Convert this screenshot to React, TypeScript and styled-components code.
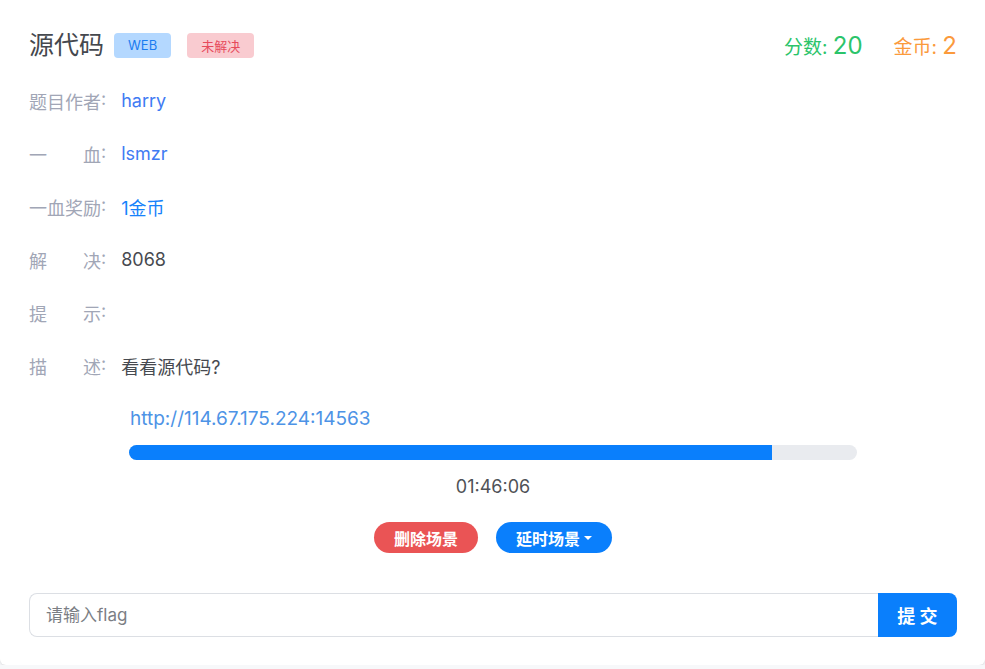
import React from 'react'
import styled, { createGlobalStyle } from 'styled-components'

const GlobalStyle = createGlobalStyle`
  body {
    margin: 0;
    background: #f7f8fa;
    font-family: Inter, 'Noto Sans CJK SC', sans-serif;
  }
`

interface Info {
  label: string
  value: string
  tone?: 'link' | 'coin' | 'plain'
}

const rows: Info[] = [
  { label: '题目作者', value: 'harry', tone: 'link' },
  { label: '一血', value: 'lsmzr', tone: 'link' },
  { label: '一血奖励', value: '1金币', tone: 'coin' },
  { label: '解决', value: '8068', tone: 'plain' },
  { label: '提示', value: '', tone: 'plain' },
  { label: '描述', value: '看看源代码?', tone: 'plain' }
]

const toneColor = {
  link: '#3f7bf3',
  coin: '#1682fb',
  plain: '#474a50'
}

const App: React.FC = () => {
  const progress = 88.3

  return (
    <>
      <GlobalStyle />
      <Card>
        <Header>
          <TitleGroup>
            <Title>源代码</Title>
            <Badge kind="info">WEB</Badge>
            <Badge kind="danger">未解决</Badge>
          </TitleGroup>
          <Stats>
            <Stat color="#2bc46a">
              分数: <big>20</big>
            </Stat>
            <Stat color="#fb9a3c">
              金币: <big>2</big>
            </Stat>
          </Stats>
        </Header>

        {rows.map((row) => (
          <Row key={row.label}>
            <Label>
              <LabelText>{row.label}</LabelText>:
            </Label>
            <Value color={toneColor[row.tone || 'plain']}>{row.value}</Value>
          </Row>
        ))}

        <Scene>
          <SceneUrl href="#">http://114.67.175.224:14563</SceneUrl>
          <Track>
            <Fill style={{ width: `${progress}%` }} />
          </Track>
          <Timer>01:46:06</Timer>
          <Actions>
            <PillButton color="#ea5455">删除场景</PillButton>
            <PillButton color="#0a7ffc">
              延时场景
              <Caret />
            </PillButton>
          </Actions>
        </Scene>

        <FlagForm onSubmit={(e) => e.preventDefault()}>
          <FlagInput placeholder="请输入flag" />
          <SubmitButton type="submit">提 交</SubmitButton>
        </FlagForm>
      </Card>
    </>
  )
}

const Card = styled.div`
  background: #fff;
  padding: 28px 28px 28px 29px;
  border-radius: 0 0 6px 6px;
  box-shadow: 0 1px 3px rgba(0, 0, 0, 0.12);
`

const Header = styled.div`
  display: flex;
  justify-content: space-between;
  align-items: center;
  height: 34px;
  margin-bottom: 12px;
`

const TitleGroup = styled.div`
  display: flex;
  align-items: center;
`

const Title = styled.h2`
  margin: 0 10px 0 0;
  font-size: 25px;
  font-weight: 400;
  color: #45484e;
  line-height: 34px;
`

const Badge = styled.span<{ kind: 'info' | 'danger' }>`
  display: inline-flex;
  align-items: center;
  justify-content: center;
  height: 25px;
  padding: 0 14px;
  margin-right: 16px;
  border-radius: 4px;
  font-size: 13px;
  background: ${(p) => (p.kind === 'info' ? '#b4d8ff' : '#f9cbd0')};
  color: ${(p) => (p.kind === 'info' ? '#1a7cf0' : '#e74a5c')};
`

const Stats = styled.div`
  display: flex;
  align-items: baseline;
  gap: 31px;
`

const Stat = styled.span<{ color: string }>`
  font-size: 19px;
  color: ${(p) => p.color};
  big {
    font-size: 24px;
  }
`

const Row = styled.div`
  display: flex;
  align-items: center;
  height: 53px;
  font-size: 18px;
`

const Label = styled.span`
  display: inline-flex;
  margin-right: 15px;
  color: #a1a6b6;
`

const LabelText = styled.span`
  width: 72px;
  text-align: justify;
  text-align-last: justify;
`

const Value = styled.span<{ color: string }>`
  color: ${(p) => p.color};
`

const Scene = styled.div`
  width: 728px;
  margin: 13px auto 0;
  display: flex;
  flex-direction: column;
`

const SceneUrl = styled.a`
  padding-left: 1px;
  font-size: 19px;
  line-height: 27px;
  color: #4d93e6;
  text-decoration: none;
`

const Track = styled.div`
  margin-top: 13px;
  height: 15px;
  border-radius: 8px;
  background: #e9ebef;
  overflow: hidden;
`

const Fill = styled.div`
  height: 100%;
  background: #0a7ffc;
`

const Timer = styled.div`
  margin-top: 14px;
  text-align: center;
  font-size: 18px;
  line-height: 26px;
  color: #4f5257;
`

const Actions = styled.div`
  display: flex;
  justify-content: center;
  gap: 18px;
  margin-top: 22px;
`

const PillButton = styled.button<{ color: string }>`
  display: inline-flex;
  align-items: center;
  height: 31px;
  padding: 0 20px;
  border: 0;
  border-radius: 16px;
  background: ${(p) => p.color};
  color: #fff;
  font-family: Inter, 'Noto Sans CJK SC', sans-serif;
  font-size: 16px;
  font-weight: 700;
  cursor: pointer;
`

const Caret = styled.span`
  display: inline-block;
  margin-left: 4px;
  width: 0;
  height: 0;
  border-left: 4px solid transparent;
  border-right: 4px solid transparent;
  border-top: 4px solid #fff;
`

const FlagForm = styled.form`
  display: flex;
  margin-top: 40px;
  height: 44px;
`

const FlagInput = styled.input`
  flex: 1;
  min-width: 0;
  border: 1px solid #dcdfe4;
  border-right: 0;
  border-radius: 8px 0 0 8px;
  padding: 0 16px;
  font-family: Inter, 'Noto Sans CJK SC', sans-serif;
  font-size: 17px;
  color: #333;
  outline: none;
  &::placeholder {
    color: #7b7e84;
  }
`

const SubmitButton = styled.button`
  width: 79px;
  border: 0;
  border-radius: 0 8px 8px 0;
  background: #0a7ffc;
  color: #fff;
  font-family: Inter, 'Noto Sans CJK SC', sans-serif;
  font-size: 18px;
  font-weight: 700;
  cursor: pointer;
`

export default App
